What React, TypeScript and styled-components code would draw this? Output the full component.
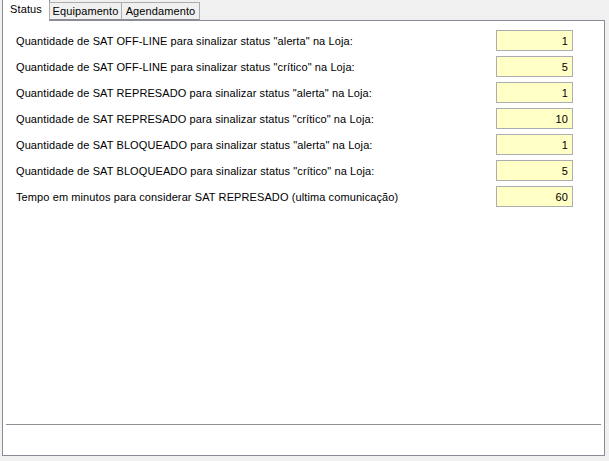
import React from 'react';
import styled, { createGlobalStyle } from 'styled-components';

const GlobalStyle = createGlobalStyle`
  html, body {
    margin: 0;
    padding: 0;
    background: #f0f0f0;
  }
  body {
    font-family: "Liberation Sans", Arial, sans-serif;
    font-size: 11px;
    letter-spacing: 0.1px;
    color: #000;
  }
`;

const Window = styled.div`
  width: 609px;
  height: 461px;
  background: #f0f0f0;
  box-sizing: border-box;
  padding: 0 4px 0 2px;
  display: flex;
  flex-direction: column;
`;

const TabStrip = styled.div`
  display: flex;
  align-items: flex-end;
  height: 20px;
  position: relative;
  z-index: 1;
`;

const Tab = styled.div<{ $active?: boolean; $width: number }>`
  box-sizing: border-box;
  width: ${(p) => p.$width}px;
  height: ${(p) => (p.$active ? '22px' : '18px')};
  margin-bottom: ${(p) => (p.$active ? '-1px' : '0')};
  margin-left: ${(p) => (p.$active ? '0' : '-1px')};
  background: ${(p) => (p.$active ? '#ffffff' : '#f0f0f0')};
  border: 1px solid ${(p) => (p.$active ? '#d9d9d9' : '#acacac')};
  border-bottom: ${(p) => (p.$active ? 'none' : '1px solid #898c95')};
  display: flex;
  align-items: center;
  justify-content: center;
  padding-bottom: ${(p) => (p.$active ? '3px' : '0')};
  white-space: nowrap;
  &:first-child {
    margin-left: 0;
    border-color: #898c95;
    border-top-color: #d9d9d9;
  }
`;

const Page = styled.div`
  flex: 0 0 436px;
  box-sizing: border-box;
  background: #ffffff;
  border: 1px solid #898c95;
  display: flex;
  flex-direction: column;
`;

const Fields = styled.div`
  flex: 1;
  padding: 9px 31px 0 13px;
  display: flex;
  flex-direction: column;
  gap: 5px;
`;

const Row = styled.div`
  display: flex;
  align-items: center;
  height: 21px;
`;

const Label = styled.span`
  flex: 1;
  white-space: nowrap;
`;

const NumberBox = styled.div`
  box-sizing: border-box;
  width: 77px;
  height: 21px;
  background: #ffffc6;
  border: 1px solid #abadb3;
  display: flex;
  align-items: center;
  justify-content: flex-end;
  padding-right: 4px;
`;

const Separator = styled.div`
  height: 1px;
  margin: 0 3px 30px 3px;
  background: #8e8f94;
`;

const tabs = [
  { title: 'Status', width: 48 },
  { title: 'Equipamento', width: 73 },
  { title: 'Agendamento', width: 79 },
];

const fields = [
  { label: 'Quantidade de SAT OFF-LINE para sinalizar status "alerta" na Loja:', value: '1' },
  { label: 'Quantidade de SAT OFF-LINE para sinalizar status "crítico" na Loja:', value: '5' },
  { label: 'Quantidade de SAT REPRESADO para sinalizar status "alerta" na Loja:', value: '1' },
  { label: 'Quantidade de SAT REPRESADO para sinalizar status "crítico" na Loja:', value: '10' },
  { label: 'Quantidade de SAT BLOQUEADO para sinalizar status "alerta" na Loja:', value: '1' },
  { label: 'Quantidade de SAT BLOQUEADO para sinalizar status "crítico" na Loja:', value: '5' },
  { label: 'Tempo em minutos para considerar SAT REPRESADO (ultima comunicação)', value: '60' },
];

const App: React.FC = () => {
  return (
    <>
      <GlobalStyle />
      <Window>
        <TabStrip>
          {tabs.map((t, i) => (
            <Tab key={t.title} $active={i === 0} $width={t.width}>
              {t.title}
            </Tab>
          ))}
        </TabStrip>
        <Page>
          <Fields>
            {fields.map((f) => (
              <Row key={f.label}>
                <Label>{f.label}</Label>
                <NumberBox>{f.value}</NumberBox>
              </Row>
            ))}
          </Fields>
          <Separator />
        </Page>
      </Window>
    </>
  );
};

export default App;
